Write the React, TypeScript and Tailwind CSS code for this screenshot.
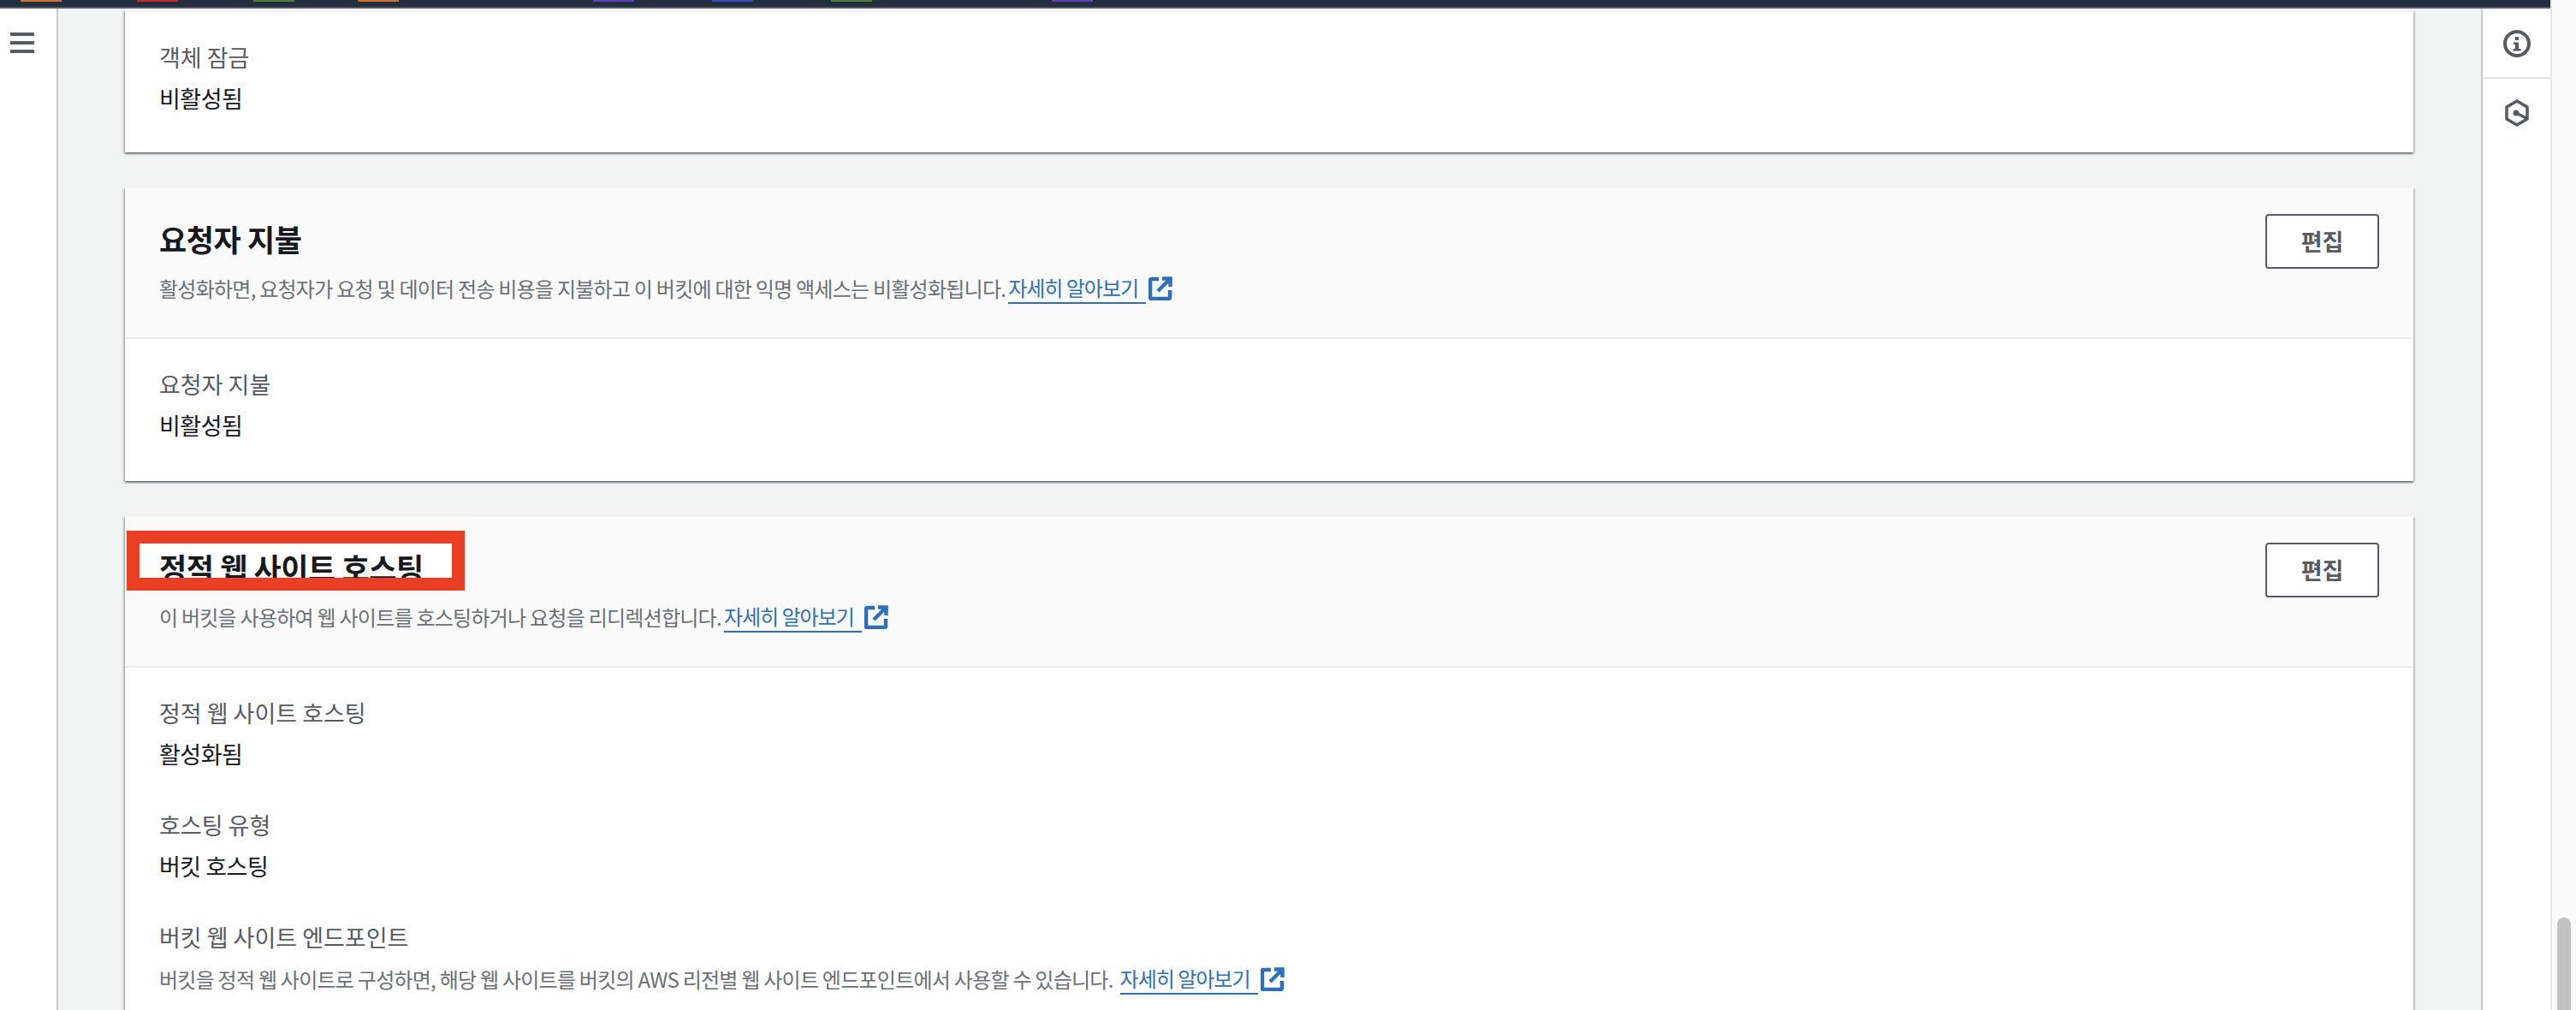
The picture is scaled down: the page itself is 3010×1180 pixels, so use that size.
import React from "react";

const FONT = "font-['Noto_Sans_CJK_KR','Noto_Sans',sans-serif]";
const SHADOW = "shadow-[0_2px_2px_0_rgba(0,28,36,0.45),2px_1px_2px_0_rgba(0,28,36,0.15),-2px_1px_2px_0_rgba(0,28,36,0.2)]";

function ExternalIcon() {
  return (
    <svg viewBox="0 0 28 28" className="w-[28px] h-[28px] ml-[3px] shrink-0 text-[#2d70b7]" fill="none" stroke="currentColor">
      <path d="M12 3H3.500a1.500 1.500 0 0 0-1.500 1.500v20A1.500 1.500 0 0 0 3.500 26h20a1.500 1.500 0 0 0 1.500-1.500V16" strokeWidth="4.500" />
      <path d="M16 2.500h9.500v9.500" strokeWidth="4.500" />
      <path d="M25 3 L11 17" strokeWidth="4.500" />
    </svg>
  );
}

function LearnMore({ tight }: { tight?: boolean }) {
  return (
    <span className={`inline-flex items-center ${tight ? "ml-[3px]" : "ml-[8px]"}`}>
      <span className="text-[#2d70b7] border-b-2 border-[#2d70b7] h-[36px] leading-[34px] pr-[9px] tracking-[-1px]">자세히 알아보기</span>
      <ExternalIcon />
    </span>
  );
}

function Field({ label, value, children }: { label: string; value?: string; children?: React.ReactNode }) {
  return (
    <div className="mb-[43px]">
      <div className="h-[40px] leading-[40px] text-[27px] text-[#545b64]">{label}</div>
      {value && <div className="mt-[8px] h-[40px] leading-[40px] text-[27px] text-[#16191f] tracking-[-0.5px]">{value}</div>}
      {children}
    </div>
  );
}

function Card({ title, desc, annotated, children }: { title: string; desc: string; annotated?: boolean; children: React.ReactNode }) {
  return (
    <section className={`bg-white ${SHADOW} mb-[41px]`}>
      <header className="relative h-[177px] bg-[#fafafa] border-b-2 border-[#eaeded] flex justify-between px-[40px] pt-[31px]">
        {annotated && <div className="absolute left-[17px] top-[32px] w-[365px] h-[40px] bg-white" />}
        <div className="relative pt-[7px]">
          <h2 className="h-[44px] leading-[44px] text-[35px] font-bold text-[#16191f] tracking-[-0.4px]">{title}</h2>
          <p className="mt-[17px] flex items-center h-[38px] text-[24px] text-[#687078] tracking-[-0.75px]">
            {desc}
            <LearnMore tight />
          </p>
        </div>
        <button className="w-[133px] h-[64px] bg-white border-2 border-[#545b64] rounded-[4px] text-[27px] font-bold text-[#545b64]">편집</button>
        {annotated && <div className="absolute left-[2px] top-[17px] w-[395px] h-[70px] border-[15px] border-[#ea3f25]" />}
      </header>
      <div className="px-[40px] pt-[33px] pb-[2px]">{children}</div>
    </section>
  );
}

export default function App() {
  const tabs = [
    ["w-[48px] ml-[24px]", "bg-[#d1702e]"],
    ["w-[48px] ml-[88px]", "bg-[#c7282e]"],
    ["w-[48px] ml-[88px]", "bg-[#4a8030]"],
    ["w-[48px] ml-[74px]", "bg-[#d1702e]"],
    ["w-[48px] ml-[227px]", "bg-[#5f3fc0]"],
    ["w-[48px] ml-[91px]", "bg-[#3b48c4]"],
    ["w-[48px] ml-[91px]", "bg-[#4a8030]"],
    ["w-[48px] ml-[210px]", "bg-[#5f3fc0]"],
  ];
  return (
    <div className={`${FONT} flex w-[3010px] h-[1180px] overflow-hidden bg-white`}>
      <div className="w-[2980px] flex flex-col">
        <div className="h-[10px] shrink-0 bg-[#232f3e] border-b-2 border-[#545b64] flex items-start">
          {tabs.map(([w, c], i) => (
            <div key={i} className={`${w} ${c} h-[2px]`} />
          ))}
        </div>
        <div className="flex-1 flex min-h-0">
          <nav className="w-[68px] shrink-0 bg-white border-r-2 border-[#c5cccd] pt-[28px] pl-[12px]">
            <div className="flex flex-col gap-[6px] w-[28px]">
              <div className="h-[4px] bg-[#545b64]" />
              <div className="h-[4px] bg-[#545b64]" />
              <div className="h-[4px] bg-[#545b64]" />
            </div>
          </nav>
          <main className="flex-1 min-w-0 bg-[#f2f3f3] pl-[78px] pr-[79px] overflow-hidden">
            <div className="h-[2px] bg-[#fafafa]" />
            <section className={`h-[166px] bg-white border-t-2 border-[#f2f3f3] ${SHADOW} mb-[41px] px-[40px] pt-[33px]`}>
              <Field label="객체 잠금" value="비활성됨" />
            </section>
            <Card title="요청자 지불" desc="활성화하면, 요청자가 요청 및 데이터 전송 비용을 지불하고 이 버킷에 대한 익명 액세스는 비활성화됩니다.">
              <Field label="요청자 지불" value="비활성됨" />
            </Card>
            <Card annotated title="정적 웹 사이트 호스팅" desc="이 버킷을 사용하여 웹 사이트를 호스팅하거나 요청을 리디렉션합니다.">
              <Field label="정적 웹 사이트 호스팅" value="활성화됨" />
              <Field label="호스팅 유형" value="버킷 호스팅" />
              <Field label="버킷 웹 사이트 엔드포인트">
                <p className="mt-[10px] flex items-center h-[38px] text-[24px] text-[#687078] tracking-[-0.75px]">
                  버킷을 정적 웹 사이트로 구성하면, 해당 웹 사이트를 버킷의 AWS 리전별 웹 사이트 엔드포인트에서 사용할 수 있습니다.
                  <LearnMore />
                </p>
              </Field>
            </Card>
          </main>
          <aside className="w-[81px] shrink-0 bg-white border-l-2 border-[#c5cccd] flex flex-col">
            <div className="h-[82px] shrink-0 border-b-2 border-[#dfe3e3] flex items-center justify-center pt-[2px]">
              <svg viewBox="0 0 32 32" className="w-[32px] h-[32px] text-[#545b64]" fill="none" stroke="currentColor">
                <circle cx="16" cy="16" r="14" strokeWidth="4" />
                <rect x="14" y="8" width="4" height="4" fill="currentColor" stroke="none" />
                <path d="M12 14.500h6V22h2.500v2.500h-9V22H14v-5h-2z" fill="currentColor" stroke="none" />
              </svg>
            </div>
            <div className="flex justify-center pt-[24px]">
              <svg viewBox="0 0 28 32" className="w-[28px] h-[32px] text-[#545b64]" fill="none" stroke="currentColor">
                <path d="M14 2 L26 9 V23 L14 30 L2 23 V9 Z" strokeWidth="3.500" strokeLinejoin="round" />
                <circle cx="13" cy="16" r="3.500" fill="currentColor" stroke="none" />
                <path d="M13 16 L25 22" strokeWidth="3.500" />
              </svg>
            </div>
          </aside>
        </div>
      </div>
      <div className="w-[30px] shrink-0 bg-[#fafafa] border-l-2 border-[#e8e8e8] pl-[6px] pt-[1072px]">
        <div className="w-[16px] h-[200px] rounded-full bg-[#c1c1c1]" />
      </div>
    </div>
  );
}
